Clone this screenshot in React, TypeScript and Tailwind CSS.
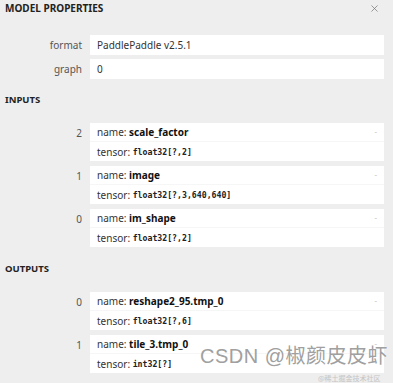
import { X } from "lucide-react";

const inputs = [
  { idx: "2", name: "scale_factor", type: "float32[?,2]" },
  { idx: "1", name: "image", type: "float32[?,3,640,640]" },
  { idx: "0", name: "im_shape", type: "float32[?,2]" },
];

const outputs = [
  { idx: "0", name: "reshape2_95.tmp_0", type: "float32[?,6]" },
  { idx: "1", name: "tile_3.tmp_0", type: "int32[?]" },
];

function Prop({ label, value }: { label: string; value: string }) {
  return (
    <div className="flex items-center gap-[8px]">
      <div className="w-[82px] text-right text-[#555]">{label}</div>
      <div className="flex-1 h-[20px] bg-white flex items-center px-[7px] text-[#333]">{value}</div>
    </div>
  );
}

function Arg({ idx, name, type }: { idx: string; name: string; type: string }) {
  return (
    <div className="flex gap-[8px]">
      <div className="w-[82px] text-right text-[#555] h-[19px] flex items-center justify-end">{idx}</div>
      <div className="flex-1 bg-white">
        <div className="h-[19px] flex items-center px-[7px] text-[#333] border-b border-[#f6f6f6]">
          <span>name:&nbsp;</span>
          <span className="font-bold text-[#111]">{name}</span>
          <span className="ml-auto text-[#c8c8c8] text-[8px]">-</span>
        </div>
        <div className="h-[19px] flex items-center px-[7px] text-[#333]">
          <span>tensor:&nbsp;</span>
          <span className="font-bold text-[#222] text-[8.2px] font-['DejaVu_Sans_Mono',monospace]">{type}</span>
        </div>
      </div>
    </div>
  );
}

export default function App() {
  return (
    <div className="relative w-[393px] h-[383px] overflow-hidden bg-[#eeeeee] font-['Noto_Sans',sans-serif] text-[10px] leading-[14px]">
      <div className="flex items-center justify-between pl-[5px] pr-[13px] pt-[1px] h-[15px]">
        <div className="font-bold text-[10px] text-[#222]">MODEL PROPERTIES</div>
        <X size={11} strokeWidth={1.6} className="text-[#777]" />
      </div>

      <div className="pr-[9px] pt-[20px] flex flex-col gap-[4px]">
        <Prop label="format" value="PaddlePaddle v2.5.1" />
        <Prop label="graph" value="0" />
      </div>

      <div className="pl-[5px] mt-[14px] font-bold text-[9.5px] text-[#222]">INPUTS</div>
      <div className="pr-[9px] mt-[16px] flex flex-col gap-[5px]">
        {inputs.map((a) => (
          <Arg key={a.name} {...a} />
        ))}
      </div>

      <div className="pl-[5px] mt-[15px] font-bold text-[9.5px] text-[#222]">OUTPUTS</div>
      <div className="pr-[9px] mt-[16px] flex flex-col gap-[5px]">
        {outputs.map((a) => (
          <Arg key={a.name} {...a} />
        ))}
      </div>

      <div className="absolute left-[200px] top-[343px] text-[20px] leading-[26px] text-[#a0a0a0] font-['Liberation_Sans','Noto_Sans_CJK_SC',sans-serif] tracking-[0.5px] [text-shadow:0_0_2px_#fff]">
        CSDN @椒颜皮皮虾
      </div>
      <div className="absolute left-[318px] top-[374px] text-[7px] leading-[9px] text-[#c4c4c4] font-['Noto_Sans_CJK_SC',sans-serif]">
        @稀土掘金技术社区
      </div>
    </div>
  );
}
